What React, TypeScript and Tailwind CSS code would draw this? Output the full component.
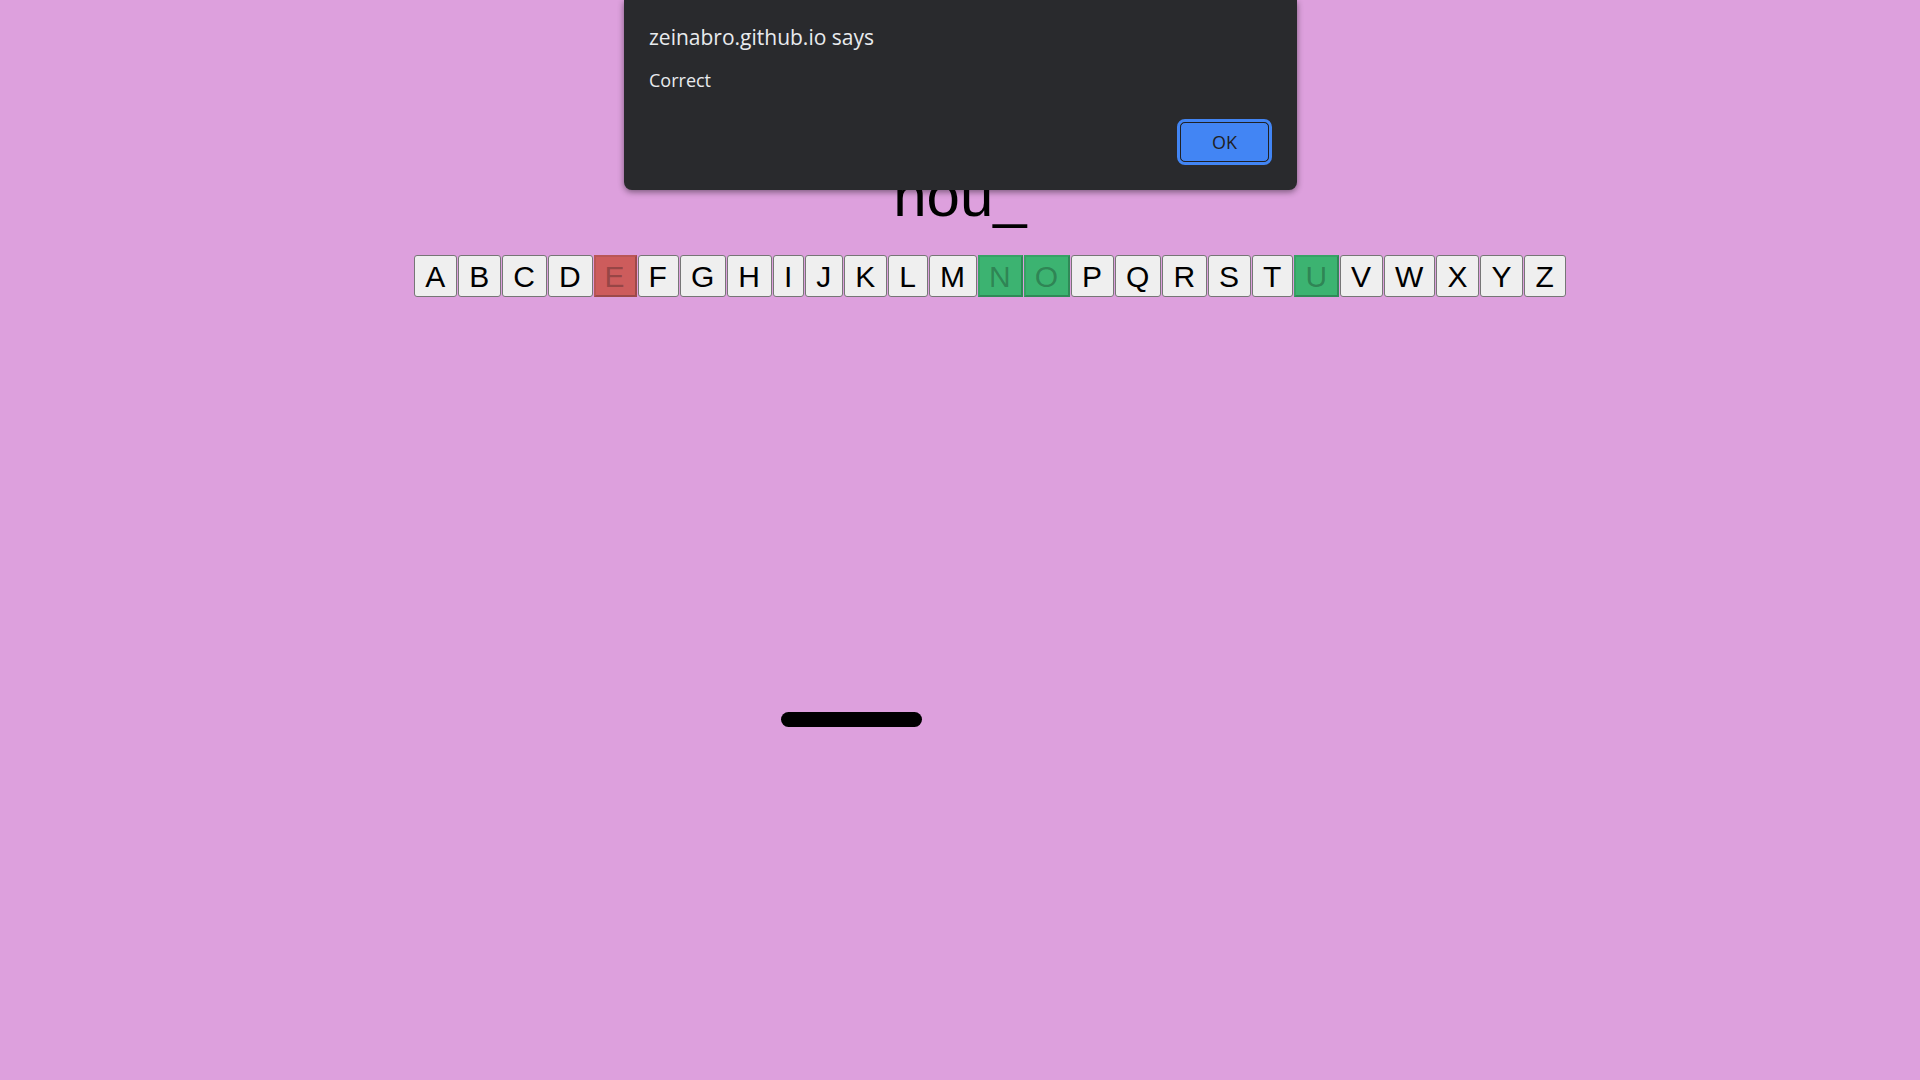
const LETTERS = "ABCDEFGHIJKLMNOPQRSTUVWXYZ".split("");
const WRONG = ["E"];
const RIGHT = ["N", "O", "U"];

function LetterButton({ letter }: { letter: string }) {
  if (WRONG.includes(letter)) {
    return (
      <button
        disabled
        className="h-[42px] pl-[9px] pr-[10px] pt-[6px] pb-[4px] leading-[28px] bg-[#cd5c5c] text-[rgba(16,16,16,0.3)] border-2 border-t-[#b95656] border-l-[#b95656] border-b-[#9c4a4a] border-r-[#9c4a4a]"
      >
        {letter}
      </button>
    );
  }
  if (RIGHT.includes(letter)) {
    return (
      <button
        disabled
        className="h-[42px] pl-[9px] pr-[10px] pt-[6px] pb-[4px] leading-[28px] bg-[#3cb371] text-[rgba(16,16,16,0.3)] border-2 border-t-[#37a266] border-l-[#37a266] border-b-[#2f8a57] border-r-[#2f8a57]"
      >
        {letter}
      </button>
    );
  }
  return (
    <button className="h-[42px] pl-[10px] pr-[11px] pt-[7px] pb-[5px] leading-[28px] bg-[#efefef] text-black border border-[#767676] rounded-[3px]">
      {letter}
    </button>
  );
}

function AlertDialog() {
  return (
    <div className="absolute top-0 left-[624px] w-[673px] h-[190px] bg-[#292a2d] rounded-b-[8px] shadow-[0_2px_6px_rgba(0,0,0,0.45)] px-[25px] flex flex-col" style={{ fontFamily: '"Open Sans", "Noto Sans", sans-serif' }}>
      <div className="mt-[22px] text-[21px] leading-[30px] text-[#e8eaed]">zeinabro.github.io says</div>
      <div className="mt-[16px] text-[18px] leading-[24px] text-[#e8eaed]">Correct</div>
      <div className="flex justify-end mt-auto mb-[25px]">
        <div className="rounded-[8px] border-[3px] border-[#4285f4]">
          <button className="w-[89px] h-[40px] rounded-[5px] bg-[#4285f4] border border-[#202124] text-[#202124] text-[18px]">
            OK
          </button>
        </div>
      </div>
    </div>
  );
}

export default function App() {
  return (
    <div className="relative min-h-[1080px] bg-[#dda0dd]" style={{ fontFamily: '"Liberation Sans", Arial, sans-serif' }}>
      <div className="pt-[162px] text-center text-[60px] leading-[67px] text-black">nou_</div>
      <div className="mt-[26px] flex justify-center gap-px pl-[60px] text-[30px]">
        {LETTERS.map((l) => (
          <LetterButton key={l} letter={l} />
        ))}
      </div>
      <div className="mt-[415px] ml-[781px] w-[141px] h-[15px] rounded-full bg-black" />
      <AlertDialog />
    </div>
  );
}
